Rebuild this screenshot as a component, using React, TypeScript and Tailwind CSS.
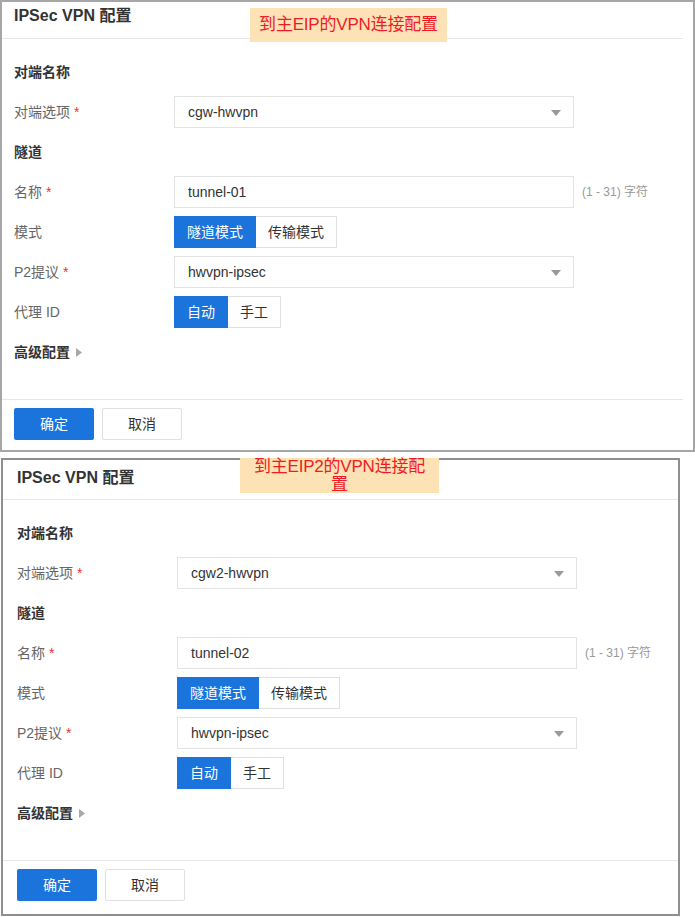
import React from "react";

const FONT = { fontFamily: '"Liberation Sans", "Noto Sans CJK SC", sans-serif' };

function Arrow() {
  return (
    <svg width="10" height="6" viewBox="0 0 10 6" className="absolute right-[12px] top-[13px]">
      <path d="M0 0 L10 0 L5 6 Z" fill="#9a9a9a" />
    </svg>
  );
}

function Label({ text, req }: { text: string; req?: boolean }) {
  return (
    <div className="w-[160px] shrink-0 text-[14px] text-[#666]">
      {text}
      {req && <span className="text-[#e5353a]"> *</span>}
    </div>
  );
}

function Select({ value }: { value: string }) {
  return (
    <div className="relative w-[400px] h-[32px] border border-[#e3e3e3] bg-white flex items-center pl-[13px] text-[14px] text-[#333]">
      {value}
      <Arrow />
    </div>
  );
}

function Seg({ items }: { items: string[] }) {
  return (
    <div className="flex h-[32px]">
      {items.map((t, i) =>
        i === 0 ? (
          <div key={t} className="h-[32px] px-[13px] flex items-center bg-[#1a74dc] text-white text-[14px]">
            {t}
          </div>
        ) : (
          <div key={t} className="h-[32px] px-[12px] flex items-center border border-[#e0e0e0] border-l-0 bg-white text-[#333] text-[14px]">
            {t}
          </div>
        )
      )}
    </div>
  );
}

function Panel({
  peer,
  tunnel,
  variant,
}: {
  peer: string;
  tunnel: string;
  variant: 1 | 2;
}) {
  const one = variant === 1;
  return (
    <div
      className={
        one
          ? "relative w-[695px] h-[452px] border-2 border-[#a6a6a6] bg-white flex flex-col"
          : "relative ml-[1px] mt-[6px] w-[679px] h-[458px] border-2 border-[#8f8f8f] bg-white flex flex-col"
      }
    >
      <div className={one ? "mr-[10px] h-[37px] pt-[4px] pl-[12px] border-b border-[#e6e6e6]" : "h-[40px] pt-[8px] pl-[14px] border-b border-[#e6e6e6]"}>
        <div className="text-[16px] leading-[20px] font-bold text-[#333]">IPSec VPN 配置</div>
      </div>
      <div className={one ? "pl-[12px] pt-[17px] pb-[31px] flex flex-col gap-2" : "pl-[14px] pt-[17px] pb-[31px] flex flex-col gap-2"}>
        <div className="h-[32px] flex items-center text-[14px] font-bold text-[#333]">对端名称</div>
        <div className="h-[32px] flex items-center">
          <Label text="对端选项" req />
          <Select value={peer} />
        </div>
        <div className="h-[32px] flex items-center text-[14px] font-bold text-[#333]">隧道</div>
        <div className="h-[32px] flex items-center">
          <Label text="名称" req />
          <div className="w-[400px] h-[32px] border border-[#e3e3e3] bg-white flex items-center pl-[13px] text-[14px] text-[#333]">
            {tunnel}
          </div>
          <div className="ml-[8px] text-[12px] text-[#999]">(1 - 31) 字符</div>
        </div>
        <div className="h-[32px] flex items-center">
          <Label text="模式" />
          <Seg items={["隧道模式", "传输模式"]} />
        </div>
        <div className="h-[32px] flex items-center">
          <Label text="P2提议" req />
          <Select value="hwvpn-ipsec" />
        </div>
        <div className="h-[32px] flex items-center">
          <Label text="代理 ID" />
          <Seg items={["自动", "手工"]} />
        </div>
        <div className="h-[32px] flex items-center text-[14px] font-bold text-[#333]">
          高级配置
          <svg width="6" height="9" viewBox="0 0 6 9" className="ml-[6px]">
            <path d="M0 0 L6 4.5 L0 9 Z" fill="#a8a8a8" />
          </svg>
        </div>
      </div>
      <div className={one ? "mr-[10px] border-t border-[#e6e6e6] pl-[12px] pt-[8px] flex gap-2" : "border-t border-[#e6e6e6] pl-[14px] pt-[8px] flex gap-2"}>
        <div className="w-[80px] h-[32px] rounded-[2px] bg-[#1a74dc] text-white text-[14px] flex items-center justify-center">确定</div>
        <div className="w-[80px] h-[32px] rounded-[2px] border border-[#e0e0e0] bg-white text-[#333] text-[14px] flex items-center justify-center">取消</div>
      </div>
      {one ? (
        <div className="absolute left-[248px] top-[6px] w-[197px] h-[34px] bg-[#fde2b5] flex items-center justify-center text-[17px] tracking-[-0.2px] text-[#ee1c25]">
          到主EIP的VPN连接配置
        </div>
      ) : (
        <div className="absolute left-[237px] top-[-2px] w-[199px] h-[35px] bg-[#fde2b5] text-center text-[17px] leading-[18px] tracking-[-0.2px] text-[#ee1c25]">
          到主EIP2的VPN连接配
          <br />置
        </div>
      )}
    </div>
  );
}

export default function App() {
  return (
    <div className="w-[695px] h-[917px] bg-white overflow-hidden" style={FONT}>
      <Panel peer="cgw-hwvpn" tunnel="tunnel-01" variant={1} />
      <Panel peer="cgw2-hwvpn" tunnel="tunnel-02" variant={2} />
    </div>
  );
}
